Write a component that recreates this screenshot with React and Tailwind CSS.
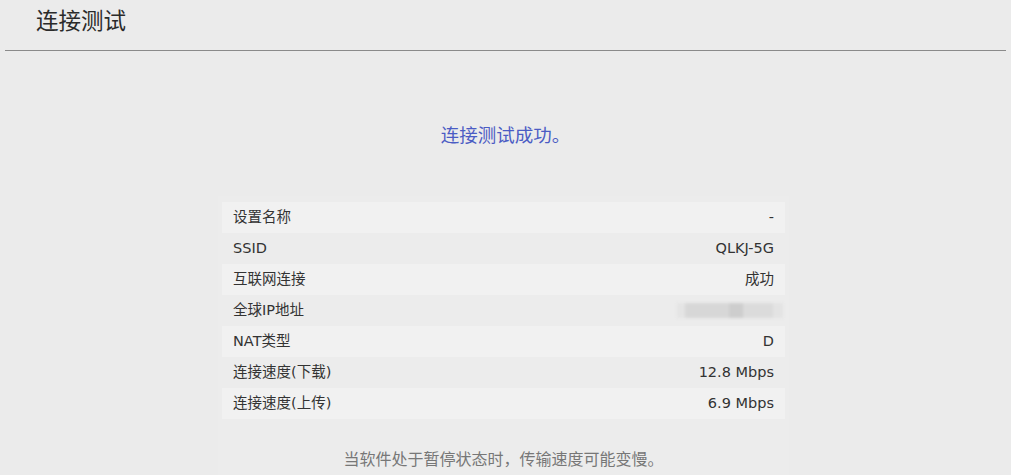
const rows = [
  { label: '设置名称', value: '-' },
  { label: 'SSID', value: 'QLKJ-5G' },
  { label: '互联网连接', value: '成功' },
  { label: '全球IP地址', value: null },
  { label: 'NAT类型', value: 'D' },
  { label: '连接速度(下载)', value: '12.8 Mbps' },
  { label: '连接速度(上传)', value: '6.9 Mbps' },
];

const BlurredIp = () => (
  <div className="-mr-[9px] flex h-[16px] items-center blur-[1.5px]">
    <div className="h-[15px] w-[8px] bg-[#e4e4e4]" />
    <div className="h-[15px] w-[44px] bg-[#d7d7d7]" />
    <div className="h-[15px] w-[14px] bg-[#cdcdcd]" />
    <div className="h-[15px] w-[30px] bg-[#dbdbdb]" />
    <div className="h-[15px] w-[10px] bg-[#e3e3e3]" />
  </div>
);

export default function App() {
  return (
    <div
      className="h-[475px] w-[1011px] overflow-hidden bg-[#ebebeb] text-[#333]"
      style={{ fontFamily: '"DejaVu Sans", "Noto Sans CJK SC", sans-serif' }}
    >
      <div className="px-[5px]">
        <div className="flex h-[51px] items-center border-b border-[#8a8a8a] pl-[31px] pb-[7px]">
          <h1 className="text-[22.5px] font-normal text-[#2a2a2a]">连接测试</h1>
        </div>
      </div>

      <div className="mt-[72px] text-center text-[18.5px] leading-[26px] text-[#4b5cc4]">
        连接测试成功。
      </div>

      <div className="ml-[218px] mt-[47px] w-[571px] bg-[#ececec] px-[4px] pt-[6px]">
        <div className="flex flex-col">
          {rows.map((row, i) => (
            <div
              key={row.label}
              className={
                'flex h-[31px] items-center justify-between pl-[11px] pr-[11px] text-[14.5px] ' +
                (i % 2 === 0 ? 'bg-[#f1f1f1]' : 'bg-[#ececec]')
              }
            >
              <span className="whitespace-nowrap">{row.label}</span>
              {row.value === null ? <BlurredIp /> : <span>{row.value}</span>}
            </div>
          ))}
        </div>
        <div className="pb-[10px] pt-[30px] text-center text-[16px] leading-[22px] text-[#777]">
          当软件处于暂停状态时，传输速度可能变慢。
        </div>
      </div>
    </div>
  );
}
